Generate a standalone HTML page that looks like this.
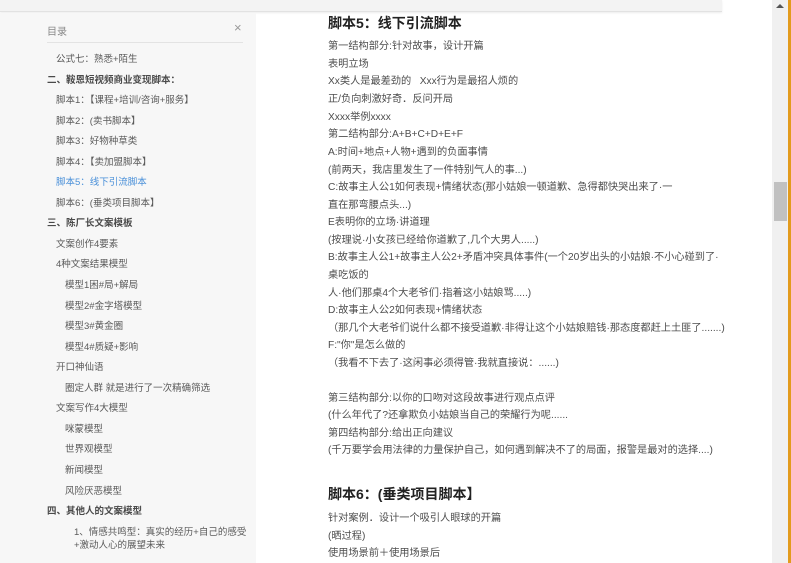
<!DOCTYPE html>
<html><head><meta charset="utf-8"><style>
*{margin:0;padding:0;box-sizing:border-box}
body{width:791px;height:563px;overflow:hidden;background:#fff;position:relative;font-family:"Liberation Sans","Noto Sans CJK SC",sans-serif}
.top{position:absolute;left:0;top:0;width:722px;height:12px;background:#f3f3f3;border-bottom:1px solid #e2e2e2;box-shadow:0 1px 2px rgba(0,0,0,.08)}
.side{position:absolute;left:0;top:13px;width:256px;height:550px;background:#f7f7f7}
.side .t{position:absolute;left:47px;top:10px;font-size:10px;color:#888}
.side .x{position:absolute;left:234px;top:7px;font-size:13px;color:#999}
.side .hr{position:absolute;left:47px;top:29px;width:196px;height:1px;background:#e3e3e3}
.it{position:absolute;font-size:9.5px;color:#5a5a5a;white-space:nowrap;line-height:12px}
.b{font-weight:bold;color:#4a4a4a}
.main{position:absolute;left:328px;font-size:10.2px;color:#4d4d4d;white-space:nowrap;line-height:14px}
.h{font-size:14px;font-weight:bold;color:#222;line-height:18px}
.sb{position:absolute;left:772px;top:0;width:16px;height:563px;background:#f0f0f0}
.th{position:absolute;left:774px;top:182px;width:13px;height:39px;background:#c1c1c1}
.or{position:absolute;left:788px;top:0;width:3px;height:563px;background:#e39b1d}
</style></head><body>
<div class="top"></div>
<div class="side">
<div class="t">目录</div><div class="x">×</div><div class="hr"></div>
</div>
<div class="it" style="left:56px;top:54px">公式七：熟悉+陌生</div>
<div class="it b" style="left:47px;top:75px">二、鞍恩短视频商业变现脚本：</div>
<div class="it" style="left:56px;top:95px">脚本1：【课程+培训/咨询+服务】</div>
<div class="it" style="left:56px;top:116px">脚本2：(卖书脚本】</div>
<div class="it" style="left:56px;top:136px">脚本3：好物种草类</div>
<div class="it" style="left:56px;top:157px">脚本4：【卖加盟脚本】</div>
<div class="it" style="left:56px;top:177px;color:#4a90d9">脚本5：线下引流脚本</div>
<div class="it" style="left:56px;top:198px">脚本6：(垂类项目脚本】</div>
<div class="it b" style="left:47px;top:218px">三、陈厂长文案模板</div>
<div class="it" style="left:56px;top:239px">文案创作4要素</div>
<div class="it" style="left:56px;top:259px">4种文案结果模型</div>
<div class="it" style="left:65px;top:280px">模型1困#局+解局</div>
<div class="it" style="left:65px;top:301px">模型2#金字塔模型</div>
<div class="it" style="left:65px;top:321px">模型3#黄金圈</div>
<div class="it" style="left:65px;top:342px">模型4#质疑+影响</div>
<div class="it" style="left:56px;top:362px">开口神仙语</div>
<div class="it" style="left:65px;top:383px">圈定人群 就是进行了一次精确筛选</div>
<div class="it" style="left:56px;top:403px">文案写作4大模型</div>
<div class="it" style="left:65px;top:424px">咪蒙模型</div>
<div class="it" style="left:65px;top:444px">世界观模型</div>
<div class="it" style="left:65px;top:465px">新闻模型</div>
<div class="it" style="left:65px;top:486px">风险厌恶模型</div>
<div class="it b" style="left:47px;top:506px">四、其他人的文案模型</div>
<div class="it" style="left:74px;top:527px;line-height:12.5px">1、情感共鸣型：真实的经历+自己的感受<br>+激动人心的展望未来</div>

<div class="main h" style="top:14px">脚本5：线下引流脚本</div>
<div class="main" style="top:40px">第一结构部分:针对故事，设计开篇</div>
<div class="main" style="top:58px">表明立场</div>
<div class="main" style="top:75px">Xx类人是最差劲的 &nbsp; Xxx行为是最招人烦的</div>
<div class="main" style="top:93px">正/负向刺激好奇．反问开局</div>
<div class="main" style="top:111px">Xxxx举例xxxx</div>
<div class="main" style="top:128px">第二结构部分:A+B+C+D+E+F</div>
<div class="main" style="top:146px">A:时间+地点+人物+遇到的负面事情</div>
<div class="main" style="top:164px">(前两天，我店里发生了一件特别气人的事...)</div>
<div class="main" style="top:181px">C:故事主人公1如何表现+情绪状态(那小姑娘一顿道歉、急得都快哭出来了·一</div>
<div class="main" style="top:199px">直在那弯腰点头...)</div>
<div class="main" style="top:216px">E表明你的立场·讲道理</div>
<div class="main" style="top:234px">(按理说·小女孩已经给你道歉了,几个大男人.....)</div>
<div class="main" style="top:251px">B:故事主人公1+故事主人公2+矛盾冲突具体事件(一个20岁出头的小姑娘·不小心碰到了·</div>
<div class="main" style="top:269px">桌吃饭的</div>
<div class="main" style="top:287px">人·他们那桌4个大老爷们·指着这小姑娘骂.....)</div>
<div class="main" style="top:304px">D:故事主人公2如何表现+情绪状态</div>
<div class="main" style="top:322px">（那几个大老爷们说什么都不接受道歉·非得让这个小姑娘赔钱·那态度都赶上土匪了.......)</div>
<div class="main" style="top:339px">F:"你"是怎么做的</div>
<div class="main" style="top:357px">（我看不下去了·这闲事必须得管·我就直接说：......)</div>
<div class="main" style="top:392px">第三结构部分:以你的口吻对这段故事进行观点点评</div>
<div class="main" style="top:409px">(什么年代了?还拿欺负小姑娘当自己的荣耀行为呢......</div>
<div class="main" style="top:427px">第四结构部分:给出正向建议</div>
<div class="main" style="top:444px">(千万要学会用法律的力量保护自己，如何遇到解决不了的局面，报警是最对的选择....)</div>
<div class="main h" style="top:485px">脚本6：(垂类项目脚本】</div>
<div class="main" style="top:512px">针对案例．设计一个吸引人眼球的开篇</div>
<div class="main" style="top:530px">(晒过程)</div>
<div class="main" style="top:547px">使用场景前＋使用场景后</div>

<div class="sb"></div>
<div style="position:absolute;left:776px;top:4px;width:0;height:0;border-left:4px solid transparent;border-right:4px solid transparent;border-bottom:4px solid #555"></div>
<div class="th"></div>
<div class="or"></div>
</body></html>
